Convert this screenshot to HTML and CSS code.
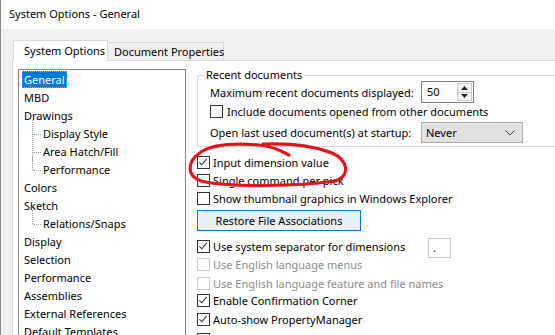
FILE: index.html
```html
<!DOCTYPE html>
<html>
<head>
    <title>System Options - General</title>
    <link rel="stylesheet" href="styles.css">
</head>
<body>
    <div class="window">
        <div class="titlebar">System Options - General</div>
        <div class="dialog">
            <div class="tabs">
                <div class="tab active">System Options</div>
                <div class="tab">Document Properties</div>
            </div>
            <div class="panel">
                <ul class="tree">
                    <li><span class="selected">General</span></li>
                    <li><span>MBD</span></li>
                    <li><span>Drawings</span></li>
                    <li class="child"><span>Display Style</span></li>
                    <li class="child"><span>Area Hatch/Fill</span></li>
                    <li class="child last"><span>Performance</span></li>
                    <li><span>Colors</span></li>
                    <li><span>Sketch</span></li>
                    <li class="child last"><span>Relations/Snaps</span></li>
                    <li><span>Display</span></li>
                    <li><span>Selection</span></li>
                    <li><span>Performance</span></li>
                    <li><span>Assemblies</span></li>
                    <li><span>External References</span></li>
                    <li><span>Default Templates</span></li>
                </ul>

                <div class="options">
                    <fieldset class="group">
                        <legend>Recent documents</legend>
                        <div class="grow first">
                            <span class="label">Maximum recent documents displayed:</span>
                            <div class="spin">
                                <span class="spin-value">50</span>
                                <div class="spin-buttons">
                                    <span class="spin-btn"><svg width="7" height="4" viewBox="0 0 7 4"><path d="M0 4 L3.5 0 L7 4 Z" fill="#222"/></svg></span>
                                    <span class="spin-btn"><svg width="7" height="4" viewBox="0 0 7 4"><path d="M0 0 L3.5 4 L7 0 Z" fill="#222"/></svg></span>
                                </div>
                            </div>
                        </div>
                        <div class="grow check-row">
                            <span class="cb"></span>
                            <span>Include documents opened from other documents</span>
                        </div>
                        <div class="grow last-row">
                            <span class="label">Open last used document(s) at startup:</span>
                            <div class="select">
                                <span>Never</span>
                                <svg width="10" height="6" viewBox="0 0 10 6"><path d="M0.5 0.5 L5 5 L9.5 0.5" fill="none" stroke="#444" stroke-width="1"/></svg>
                            </div>
                        </div>
                    </fieldset>

                    <div class="row top-row"><span class="cb checked"></span>Input dimension value</div>
                    <div class="row"><span class="cb"></span>Single command per pick</div>
                    <div class="row"><span class="cb"></span>Show thumbnail graphics in Windows Explorer</div>
                    <button class="btn">Restore File Associations</button>
                    <div class="row after-btn">
                        <span class="cb checked"></span>
                        <span class="sep-label">Use system separator for dimensions</span>
                        <span class="small-box">.</span>
                    </div>
                    <div class="row disabled tall"><span class="cb"></span>Use English language menus</div>
                    <div class="row disabled"><span class="cb"></span>Use English language feature and file names</div>
                    <div class="row short"><span class="cb checked"></span>Enable Confirmation Corner</div>
                    <div class="row taller"><span class="cb checked"></span>Auto-show PropertyManager</div>
                    <div class="row"><span class="cb checked"></span>Auto-size PropertyManager panes when docking</div>
                </div>
            </div>
        </div>

        <!-- hand drawn markup over the screenshot -->
        <svg class="annotation" width="555" height="335" viewBox="0 0 555 335">
            <path d="M288 155 C279 150 269 146 258 145 C235 143 212 144 200 152 C186 161 185 176 200 181 C230 188 300 186 334 181 C350 176 347 160 331 153 C313 146 290 143 262 144"
                  fill="none" stroke="#e5131b" stroke-width="3.2" stroke-linecap="round" stroke-linejoin="round"/>
        </svg>
    </div>
</body>
</html>
```

FILE: styles.css
```css
body {
    margin: 0;
    font-family: "Noto Sans", "Open Sans", sans-serif;
    font-size: 11px;
    color: #000;
    overflow: hidden;
}
.window {
    position: relative;
    width: 555px;
    height: 335px;
    box-sizing: border-box;
    border-left: 1px solid #8a8a8a;
    background: #f0f0f0;
    overflow: hidden;
}
.titlebar {
    height: 29px;
    line-height: 28px;
    padding-left: 8px;
    background: #fff;
}
.dialog {
    padding-top: 11px;
}
.tabs {
    display: flex;
    align-items: flex-end;
    height: 20px;
    margin-left: 12px;
}
.tab {
    box-sizing: border-box;
    height: 18px;
    line-height: 17px;
    padding-left: 6px;
    width: 117px;
    margin-left: -1px;
    border: 1px solid #d9d9d9;
    border-bottom: none;
    background: #f0f0f0;
    white-space: nowrap;
}
.tab.active {
    position: relative;
    z-index: 1;
    height: 21px;
    margin-bottom: -1px;
    margin-left: 0;
    width: 95px;
    padding-left: 10px;
    line-height: 19px;
    background: #fff;
}
.panel {
    display: flex;
    margin-left: 11px;
    height: 280px;
    border-top: 1px solid #d9d9d9;
    border-left: 1px solid #d9d9d9;
    background: #fff;
}
.tree {
    list-style: none;
    margin: 8px 0 0 5px;
    padding: 1px 0 0 3px;
    width: 168px;
    box-sizing: border-box;
    border: 1px solid #828790;
    border-bottom: none;
    flex-shrink: 0;
}
.tree li {
    position: relative;
    height: 18px;
    line-height: 17px;
    white-space: nowrap;
}
.tree li span {
    display: inline-block;
    padding: 0 2px;
    height: 17px;
    box-sizing: border-box;
}
.tree .selected {
    background: #0078d7;
    color: #fff;
    outline: 1px dotted #e8a33a;
    outline-offset: -1px;
}
.tree li.child {
    padding-left: 19px;
}
.tree li.child::before {
    content: "";
    position: absolute;
    left: 10px;
    top: -5px;
    height: 23px;
    border-left: 1px dotted #a0a0a0;
}
.tree li.child.last::before {
    height: 14px;
}
.tree li.child::after {
    content: "";
    position: absolute;
    left: 11px;
    top: 9px;
    width: 8px;
    border-top: 1px dotted #a0a0a0;
}
.options {
    margin-left: 11px;
    padding-top: 8px;
}
.group {
    width: 420px;
    margin: 0;
    padding: 0 0 3px 12px;
    border: 1px solid #dcdcdc;
    min-width: 0;
}
.group legend {
    padding: 0 2px;
    margin-left: -6px;
    line-height: 12px;
}
.grow {
    display: flex;
    align-items: center;
}
.grow.first {
    height: 22px;
}
.grow.check-row {
    height: 16px;
}
.grow.last-row {
    height: 21px;
    margin-top: 3px;
}
.label {
    width: 211px;
    white-space: nowrap;
}
.spin {
    display: flex;
    box-sizing: border-box;
    width: 53px;
    height: 22px;
    border: 1px solid #7a7a7a;
}
.spin-value {
    flex: 1;
    padding-left: 5px;
    line-height: 19px;
}
.spin-buttons {
    display: flex;
    flex-direction: column;
    width: 15px;
    margin: 1px 1px 1px 0;
}
.spin-btn {
    flex: 1;
    display: flex;
    align-items: center;
    justify-content: center;
    border: 1px solid #c8c8c8;
    background: #f4f4f4;
}
.spin-btn + .spin-btn {
    border-top: none;
}
.select {
    display: flex;
    align-items: center;
    justify-content: space-between;
    box-sizing: border-box;
    width: 102px;
    height: 21px;
    padding: 0 7px 0 4px;
    border: 1px solid #adadad;
    background: #e1e1e1;
}
.cb {
    position: relative;
    display: inline-block;
    flex-shrink: 0;
    box-sizing: border-box;
    width: 13px;
    height: 13px;
    margin-right: 3px;
    border: 1px solid #333;
    background: #fff;
}
.cb.checked::after {
    content: "";
    position: absolute;
    left: 3px;
    top: 0px;
    width: 3px;
    height: 7px;
    border-right: 1px solid #333;
    border-bottom: 1px solid #333;
    transform: rotate(40deg);
}
.check-row .cb {
    margin-right: 4px;
}
.row {
    display: flex;
    align-items: center;
    height: 18px;
    white-space: nowrap;
}
.row.top-row {
    margin-top: 6px;
}
.row.tall {
    height: 19px;
}
.row.short {
    height: 17px;
}
.row.taller {
    height: 21px;
}
.row.disabled {
    color: #8c8c8c;
}
.row.disabled .cb {
    border-color: #cccccc;
}
.btn {
    display: block;
    box-sizing: border-box;
    width: 164px;
    height: 21px;
    margin: 3px 0 6px;
    padding: 0;
    font: inherit;
    color: #000;
    background: #e5f1fb;
    border: 1px solid #0078d7;
}
.sep-label {
    width: 215px;
}
.small-box {
    box-sizing: border-box;
    width: 23px;
    height: 20px;
    margin-top: 4px;
    padding-left: 4px;
    line-height: 18px;
    border: 1px solid #c8c8c8;
}
.annotation {
    position: absolute;
    left: 0;
    top: 0;
    pointer-events: none;
}
```
